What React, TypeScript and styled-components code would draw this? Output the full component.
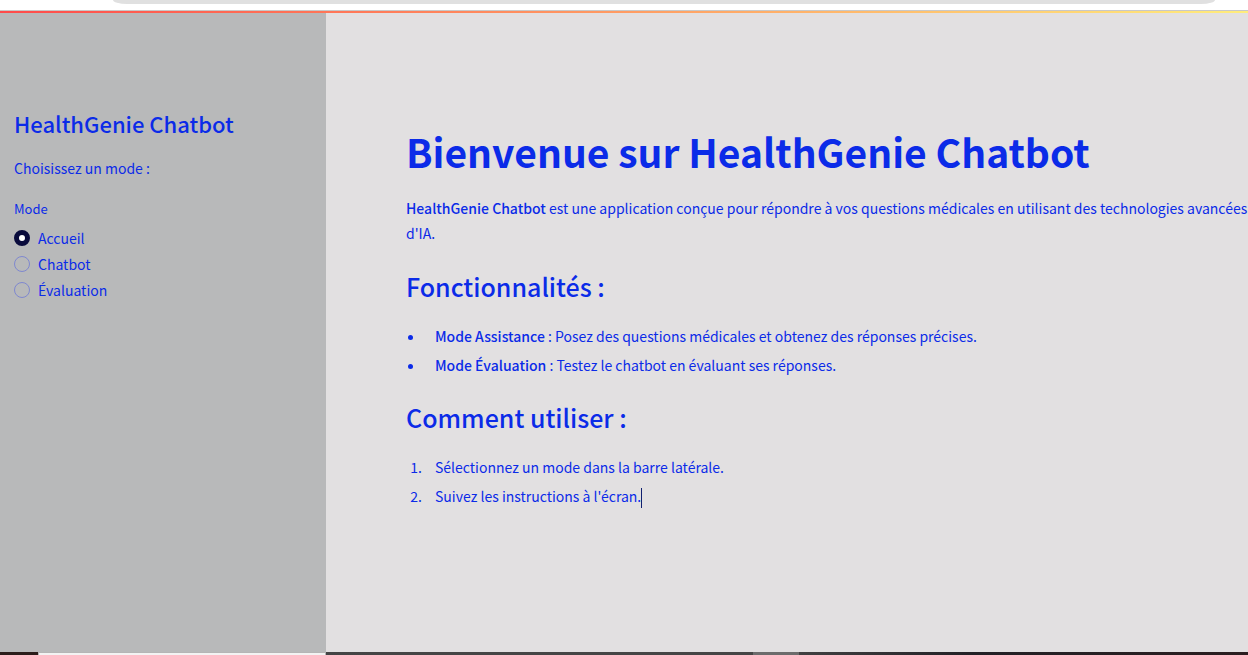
import React, { useState } from "react";
import styled, { createGlobalStyle } from "styled-components";

const GlobalStyle = createGlobalStyle`
  *, *::before, *::after { box-sizing: border-box; }
  body {
    margin: 0;
    color: #0b2be8;
    background: #e2e0e1;
    font-family: "Noto Sans CJK SC", "Noto Sans", sans-serif;
    font-size: 14px;
    line-height: 25px;
    overflow: hidden;
  }
  h1, h2, p, ul, ol, fieldset { margin: 0; padding: 0; }
`;

const Page = styled.div`
  display: flex;
  flex-direction: column;
  height: 100vh;
`;

const BrowserBar = styled.header`
  flex: none;
  height: 11px;
  padding: 0 33px 0 113px;
  background: #ffffff;
  border-bottom: 1px solid #c8c8c8;
`;

const AddressBar = styled.div`
  height: 4px;
  background: #e0e0e0;
  border-radius: 0 0 14px 14px / 0 0 4px 4px;
`;

const Decoration = styled.div`
  flex: none;
  height: 2px;
  background: linear-gradient(90deg, #ff4b4b, #fffd80 110%);
`;

const Shell = styled.div`
  display: flex;
  flex: 1;
  min-height: 0;
`;

const Sidebar = styled.aside`
  flex: none;
  width: 326px;
  padding: 94px 14px 0;
  background: #b8b9ba;
`;

const SidebarTitle = styled.h2`
  font-size: 22px;
  font-weight: 500;
  line-height: 32px;
`;

const Prompt = styled.p`
  margin-top: 17px;
`;

const ModeGroup = styled.fieldset`
  margin-top: 16px;
  border: 0;
`;

const GroupLabel = styled.legend`
  padding: 0;
  font-size: 13px;
  line-height: 24px;
  margin-bottom: 4px;
`;

const Option = styled.label`
  display: flex;
  align-items: center;
  gap: 8px;
  height: 26px;
`;

const Radio = styled.input`
  appearance: none;
  width: 16px;
  height: 16px;
  margin: 0;
  border: 1px solid #7f88cf;
  border-radius: 50%;
  &:checked {
    border: 5px solid #090b3c;
    background: #ffffff;
  }
`;

const Main = styled.main`
  flex: 1;
  min-width: 0;
  padding: 110px 0 0 80px;
  overflow: hidden;
  white-space: nowrap;
`;

const Title = styled.h1`
  font-size: 39px;
  font-weight: 700;
  line-height: 56px;
`;

const Intro = styled.p`
  padding: 17px 0 3px;
`;

const Strong = styled.strong`
  font-weight: 500;
`;

const SectionTitle = styled.h2`
  margin-top: 19px;
  font-size: 25px;
  font-weight: 500;
  line-height: 36px;
`;

const listStyles = `
  margin-top: 18px;
  padding-left: 19px;
`;

const BulletList = styled.ul`
  ${listStyles}
`;

const NumberList = styled.ol`
  ${listStyles}
`;

const Item = styled.li`
  padding: 2px 0 2px 10px;
`;

const Caret = styled.span`
  display: inline-block;
  width: 1px;
  height: 20px;
  background: #10206f;
  vertical-align: middle;
`;

const Taskbar = styled.footer`
  display: flex;
  flex: none;
  height: 3px;
  background: linear-gradient(90deg, #3a3a40, #454545 30%, #454545 62%, #232126 78%, #2b1e20);
`;

const TaskbarStart = styled.div`
  width: 38px;
  background: #2b1d1b;
`;

const TaskbarSearch = styled.div`
  width: 288px;
  background: #f3f3f3;
  border: 1px solid #b5b5b5;
  border-bottom: 0;
`;

const TaskbarActive = styled.div`
  width: 46px;
  margin-left: 427px;
  background: #6c6c6c;
`;

const modes = ["Accueil", "Chatbot", "Évaluation"];

export default function App() {
  const [mode, setMode] = useState(modes[0]);
  return (
    <Page>
      <GlobalStyle />
      <BrowserBar>
        <AddressBar />
      </BrowserBar>
      <Decoration />
      <Shell>
        <Sidebar>
          <SidebarTitle>HealthGenie Chatbot</SidebarTitle>
          <Prompt>Choisissez un mode :</Prompt>
          <ModeGroup>
            <GroupLabel>Mode</GroupLabel>
            {modes.map((name) => (
              <Option key={name}>
                <Radio
                  type="radio"
                  name="mode"
                  value={name}
                  checked={mode === name}
                  onChange={() => setMode(name)}
                />
                {name}
              </Option>
            ))}
          </ModeGroup>
        </Sidebar>
        <Main>
          <Title>Bienvenue sur HealthGenie Chatbot</Title>
          <Intro>
            <Strong>HealthGenie Chatbot</Strong> est une application conçue pour répondre à vos
            questions médicales en utilisant des technologies avancées
            <br />
            d'IA.
          </Intro>
          <SectionTitle>Fonctionnalités :</SectionTitle>
          <BulletList>
            <Item>
              <Strong>Mode Assistance</Strong> : Posez des questions médicales et obtenez des
              réponses précises.
            </Item>
            <Item>
              <Strong>Mode Évaluation</Strong> : Testez le chatbot en évaluant ses réponses.
            </Item>
          </BulletList>
          <SectionTitle>Comment utiliser :</SectionTitle>
          <NumberList>
            <Item>Sélectionnez un mode dans la barre latérale.</Item>
            <Item>
              Suivez les instructions à l'écran.
              <Caret />
            </Item>
          </NumberList>
        </Main>
      </Shell>
      <Taskbar>
        <TaskbarStart />
        <TaskbarSearch />
        <TaskbarActive />
      </Taskbar>
    </Page>
  );
}
